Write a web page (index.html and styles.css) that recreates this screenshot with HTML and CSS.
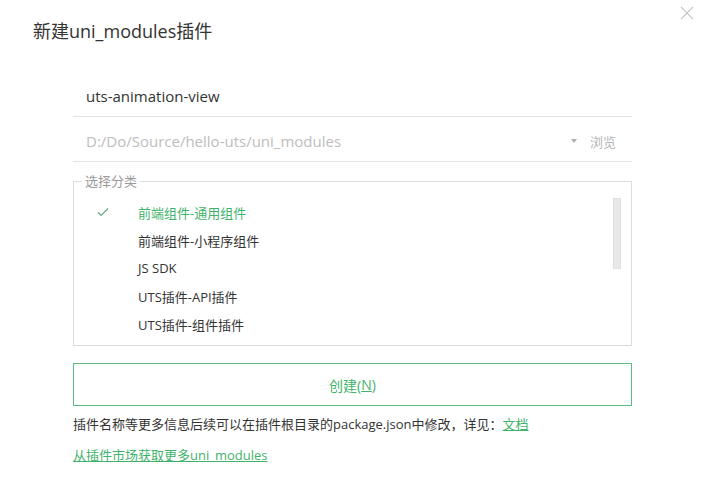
FILE: index.html
```html
<!DOCTYPE html>
<html lang="zh">
<head>
    <meta charset="UTF-8">
    <meta name="viewport" content="width=device-width, initial-scale=1.0">
    <title>新建uni_modules插件</title>
    <link rel="stylesheet" href="styles.css">
</head>
<body>
    <div class="dialog">
        <div class="dialog-header">
            <div class="dialog-title">新建uni_modules插件</div>
            <a class="close-btn">
                <svg width="14" height="14" viewBox="0 0 14 14">
                    <path d="M1 1 L13 13 M13 1 L1 13" stroke="#c8c8c8" stroke-width="1.2" fill="none"/>
                </svg>
            </a>
        </div>

        <div class="form">
            <div class="field">
                <input class="field-input" type="text" value="uts-animation-view">
            </div>
            <div class="field">
                <input class="field-input path" type="text" placeholder="D:/Do/Source/hello-uts/uni_modules">
                <span class="drop-arrow"></span>
                <a class="browse">浏览</a>
            </div>

            <fieldset class="category">
                <legend>选择分类</legend>
                <ul class="category-list">
                    <li class="selected">
                        <span class="check">
                            <svg width="12" height="10" viewBox="0 0 12 10">
                                <path d="M1 5.5 L4.2 8.5 L11 1.5" stroke="#6aa584" stroke-width="1.2" fill="none"/>
                            </svg>
                        </span>
                        前端组件-通用组件
                    </li>
                    <li><span class="check"></span>前端组件-小程序组件</li>
                    <li><span class="check"></span>JS SDK</li>
                    <li><span class="check"></span>UTS插件-API插件</li>
                    <li><span class="check"></span>UTS插件-组件插件</li>
                </ul>
                <div class="scrollbar"></div>
            </fieldset>

            <a class="create-btn" id="createBtn">创建(<u>N</u>)</a>

            <p class="hint">插件名称等更多信息后续可以在插件根目录的package.json中修改，详见：<a href="#">文档</a></p>
            <p class="market"><a href="#">从插件市场获取更多uni_modules</a></p>
        </div>
    </div>
</body>
</html>
```

FILE: styles.css
```css
* {
    margin: 0;
    padding: 0;
    box-sizing: border-box;
    font-family: "Open Sans", "Noto Sans CJK SC", sans-serif;
}

body {
    background-color: #fff;
    color: #333;
}

.dialog {
    width: 701px;
    height: 488px;
    position: relative;
}

/* Header */
.dialog-header {
    padding: 19px 33px 0;
}

.dialog-title {
    font-size: 18px;
    color: #333;
    line-height: 24px;
}

.close-btn {
    position: absolute;
    top: 6px;
    right: 7px;
    width: 14px;
    height: 14px;
    cursor: pointer;
}

.close-btn svg {
    display: block;
}

/* Form */
.form {
    width: 559px;
    margin: 29px 0 0 73px;
}

.field {
    height: 45px;
    padding-top: 4px;
    border-bottom: 1px solid #e3e3e3;
    display: flex;
    align-items: center;
}

.field-input {
    flex: 1;
    border: none;
    outline: none;
    font-size: 15px;
    color: #333;
    padding-left: 13px;
    background: transparent;
    height: 30px;
}

.field-input::placeholder {
    color: #bdbdbd;
}

.drop-arrow {
    width: 0;
    height: 0;
    border-left: 3px solid transparent;
    border-right: 3px solid transparent;
    border-top: 4px solid #b0b0b0;
    margin-right: 13px;
}

.browse {
    font-size: 13px;
    color: #b5b5b5;
    margin-right: 16px;
}

/* Category */
.category {
    position: relative;
    border: 1px solid #dcdcdc;
    margin-top: 11px;
    height: 173px;
    padding: 0;
}

.category legend {
    font-size: 13px;
    color: #999;
    margin-left: 8px;
    padding: 0 3px;
    line-height: 17px;
}

.category-list {
    list-style: none;
    padding-top: 8px;
}

.category-list li {
    height: 28px;
    display: flex;
    align-items: center;
    font-size: 13px;
    color: #333;
}

.category-list li.selected {
    color: #3fb36b;
}

.check {
    width: 64px;
    padding-left: 23px;
    display: flex;
    align-items: center;
}

.scrollbar {
    position: absolute;
    top: 8px;
    right: 10px;
    width: 8px;
    height: 71px;
    background-color: #e8e8e8;
    border: 1px solid #e0e0e0;
}

/* Button */
.create-btn {
    display: flex;
    justify-content: center;
    align-items: center;
    height: 43px;
    margin-top: 17px;
    background-color: #fff;
    border: 1px solid #5cbd80;
    color: #3fb36b;
    font-size: 14px;
    cursor: pointer;
}

.hint {
    margin-top: 9px;
    font-size: 13px;
    line-height: 18px;
    color: #333;
}

.hint a,
.market a {
    color: #3fb36b;
    text-decoration: underline;
}

.market {
    margin-top: 13px;
    font-size: 13px;
    line-height: 18px;
}
```
